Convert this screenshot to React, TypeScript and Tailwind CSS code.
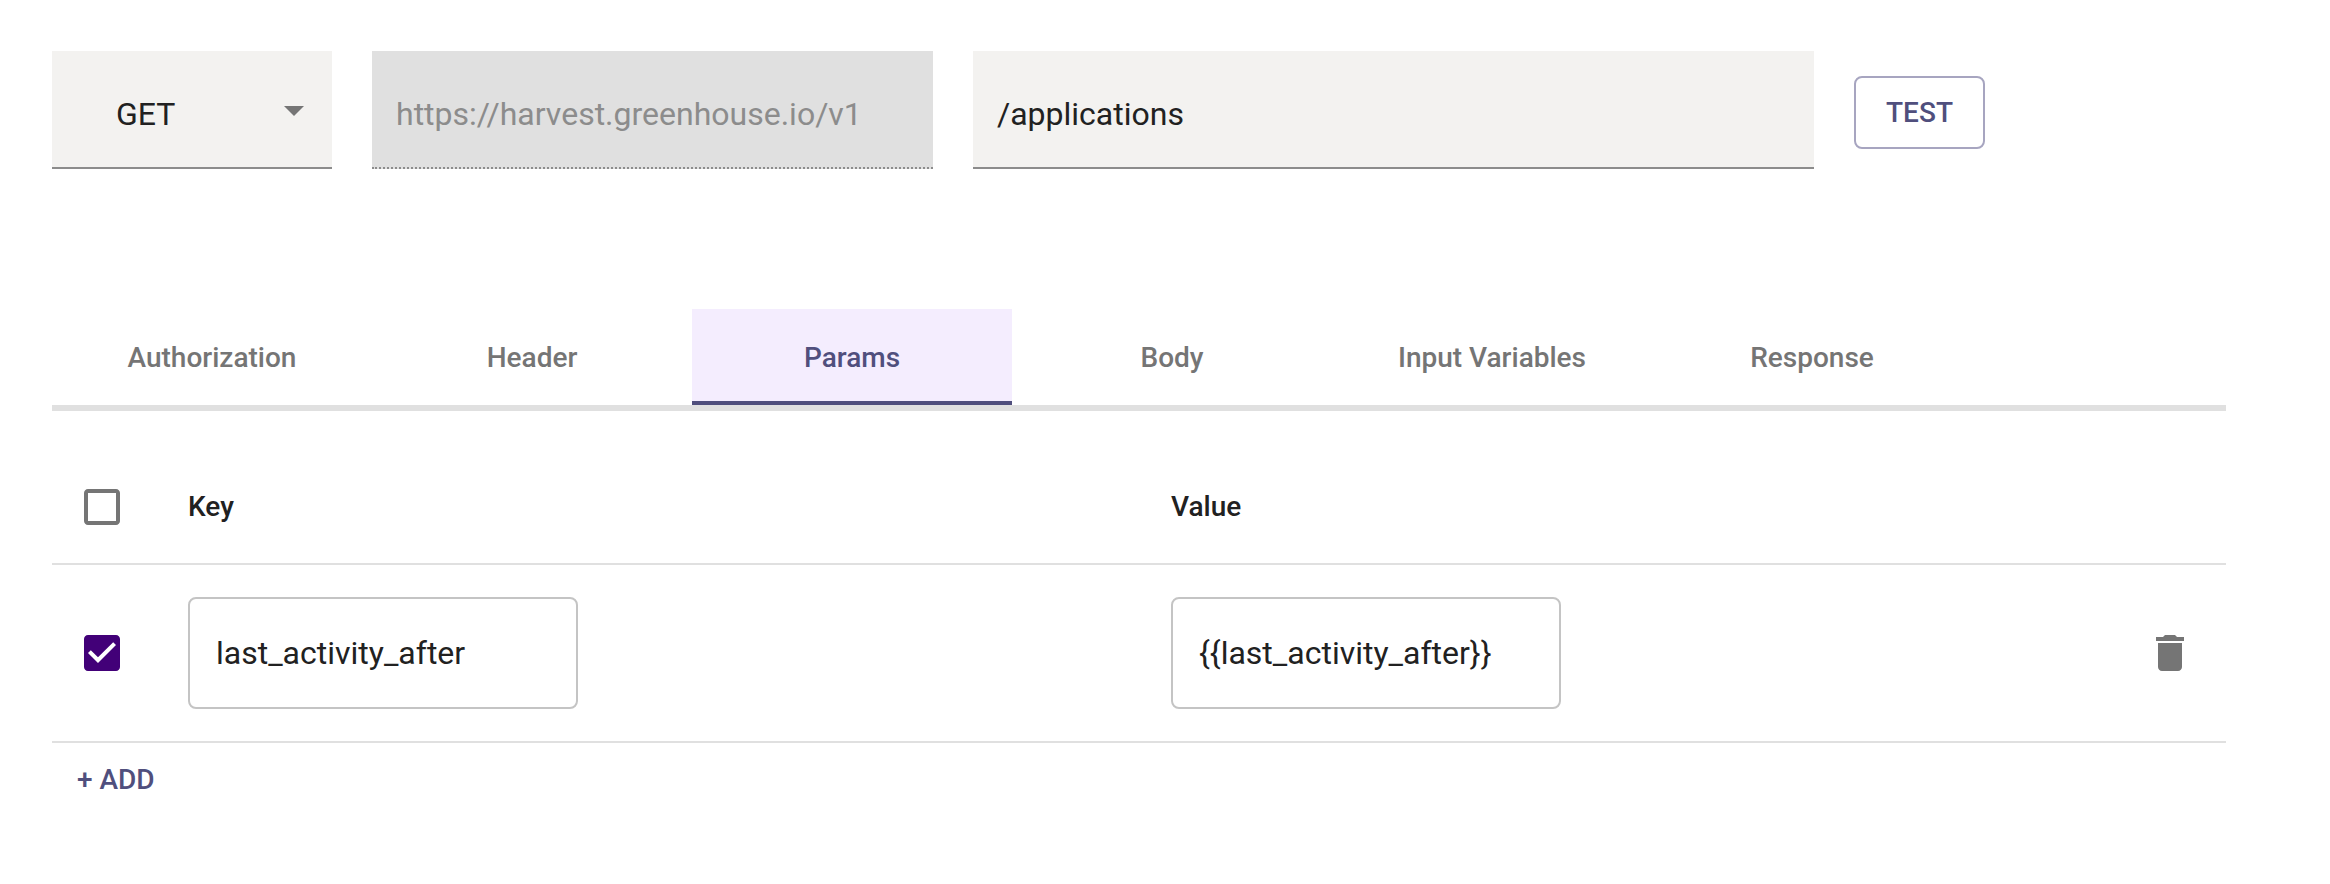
import React, { useState } from "react";

const tabs = ["Authorization", "Header", "Params", "Body", "Input Variables", "Response"];

function Icon({ d, className }: { d: string; className: string }) {
  return (
    <svg viewBox="0 0 24 24" className={`size-12 shrink-0 fill-current ${className}`} aria-hidden="true">
      <path d={d} />
    </svg>
  );
}

const icons = {
  arrow: "M7 10l5 5 5-5z",
  unchecked:
    "M19 5v14H5V5h14m0-2H5c-1.1 0-2 .9-2 2v14c0 1.1.9 2 2 2h14c1.1 0 2-.9 2-2V5c0-1.1-.9-2-2-2z",
  checked:
    "M19 3H5c-1.11 0-2 .9-2 2v14c0 1.1.89 2 2 2h14c1.11 0 2-.9 2-2V5c0-1.1-.89-2-2-2zm-9 14l-5-5 1.41-1.41L10 14.17l7.59-7.59L19 8l-9 9z",
  trash: "M6 19c0 1.1.9 2 2 2h8c1.1 0 2-.9 2-2V7H6v12zM19 4h-3.5l-1-1h-5l-1 1H5v2h14V4z",
};

function Cell({ text }: { text: string }) {
  return (
    <div className="flex h-[112px] w-[390px] items-center rounded-lg border-2 border-[#c4c4c4] pl-[26px] text-[32px] leading-[38px]">
      {text}
    </div>
  );
}

export default function App() {
  const [active, setActive] = useState("Params");
  return (
    <main className="h-[884px] w-[2330px] overflow-hidden bg-white pt-[51px] pl-[52px] font-['Roboto',sans-serif] text-[#212121]">
      <div className="flex h-[118px] gap-10 text-[32px] leading-[38px]">
        <div className="flex w-[280px] items-start justify-between border-b-2 border-[#8c8c8c] bg-[#f3f2f0] pr-[14px] pl-16">
          <span className="pt-[44px]">GET</span>
          <Icon d={icons.arrow} className="mt-[35px] text-[#757575]" />
        </div>
        <div className="w-[561px] border-b-2 border-dotted border-[#8c8c8c] bg-[#e0e0e0] pt-[44px] pl-6 text-[#8c8c8c]">
          https://harvest.greenhouse.io/v1
        </div>
        <div className="w-[841px] border-b-2 border-[#8c8c8c] bg-[#f3f2f0] pt-[44px] pl-6">/applications</div>
        <button className="mt-[25px] flex h-[73px] w-[131px] items-center justify-center rounded-lg border-2 border-[#a7a5c0] text-[28px] font-medium text-[#504f7d]">
          TEST
        </button>
      </div>

      <nav className="mt-[140px] flex h-[102px] w-[2174px] border-b-[6px] border-[#e0e0e0]">
        {tabs.map((tab) => (
          <button
            key={tab}
            onClick={() => setActive(tab)}
            className={`h-24 w-80 border-b-4 pt-[6px] text-[28px] font-medium ${
              tab === active ? "border-[#504f7d] bg-[#f4edfe] text-[#504f7d]" : "border-transparent text-[#757575]"
            }`}
          >
            {tab}
          </button>
        ))}
      </nav>

      <section className="w-[2174px]">
        <div className="flex h-[154px] items-center border-b-2 border-[#e0e0e0] pt-[40px] pl-[26px] text-[28px] font-medium">
          <Icon d={icons.unchecked} className="text-[#757575]" />
          <span className="ml-[62px] w-[983px]">Key</span>
          <span>Value</span>
        </div>
        <div className="flex h-[178px] items-center border-b-2 border-[#e0e0e0] pr-8 pl-[26px]">
          <Icon d={icons.checked} className="text-[#420078]" />
          <div className="ml-[62px] w-[983px]">
            <Cell text="last_activity_after" />
          </div>
          <Cell text="{{last_activity_after}}" />
          <Icon d={icons.trash} className="ml-auto text-[#757575]" />
        </div>
        <button className="mt-[16px] ml-[25px] flex h-[42px] items-center text-[28px] font-medium text-[#504f7d]">
          + ADD
        </button>
      </section>
    </main>
  );
}
